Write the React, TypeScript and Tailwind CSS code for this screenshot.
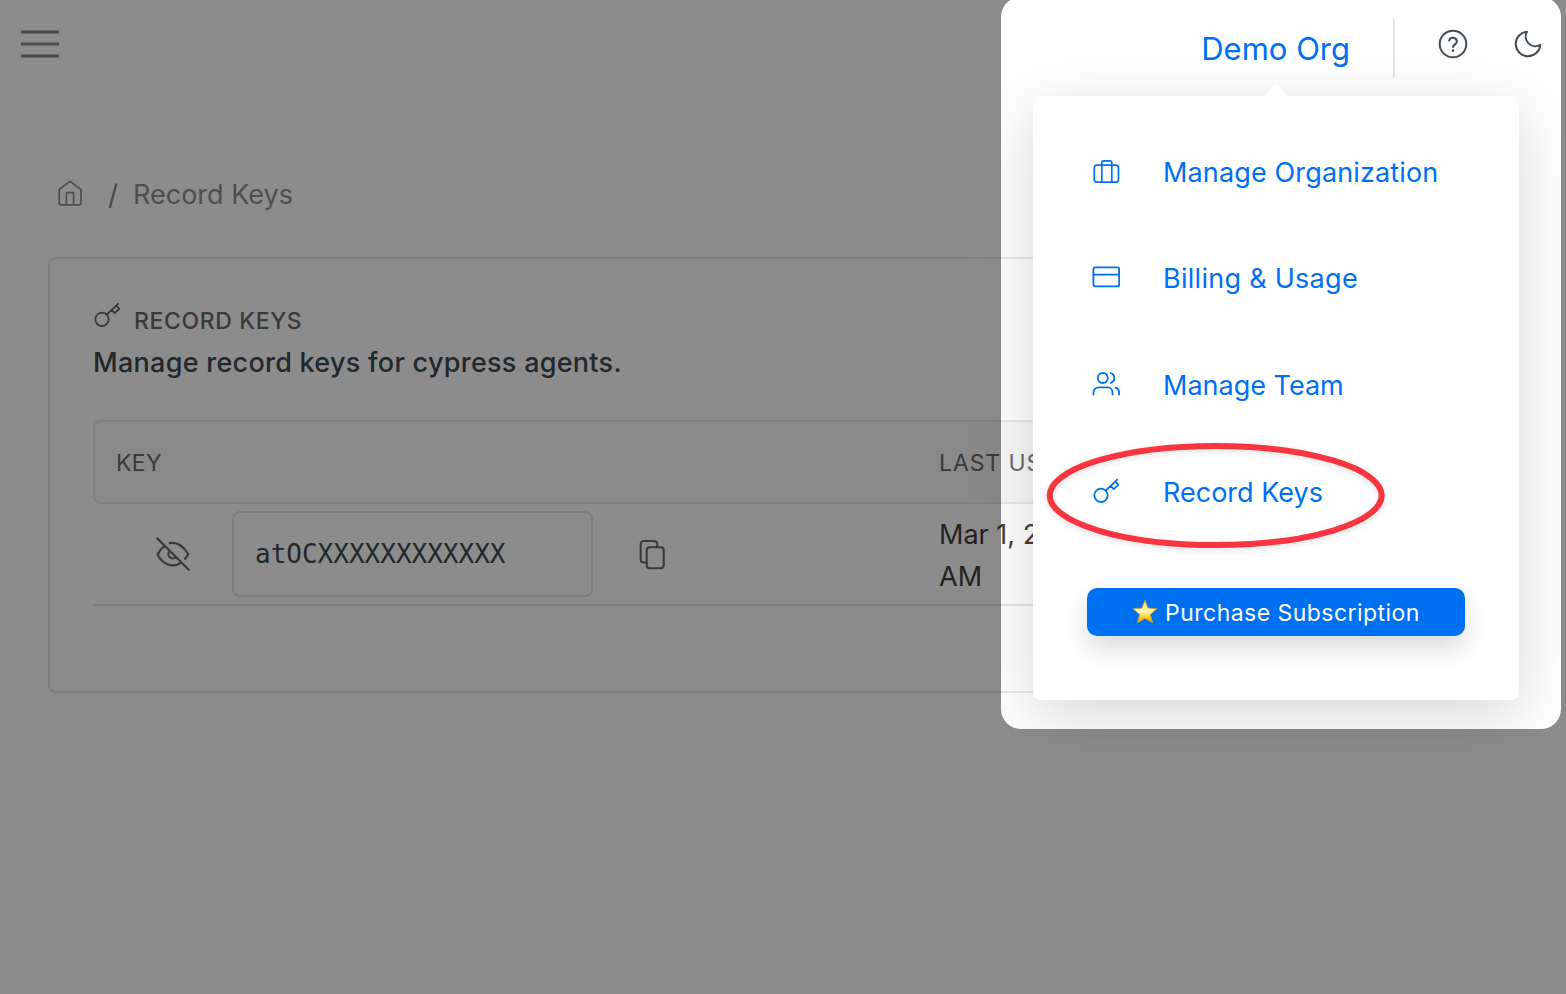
import type { ReactNode } from "react";

type IconProps = { className?: string };

function Stroke({ className, width = 1.5, children }: IconProps & { width?: number; children: ReactNode }) {
  return (
    <svg
      viewBox="0 0 28 28"
      className={"block h-7 w-7 shrink-0 " + (className ?? "")}
      fill="none"
      stroke="currentColor"
      strokeWidth={width}
      strokeLinecap="round"
      strokeLinejoin="round"
    >
      {children}
    </svg>
  );
}

const KeyIcon = ({ className }: IconProps) => (
  <Stroke className={className} width={1.8}>
    <circle cx="9" cy="18.3" r="6.7" />
    <path d="M13.8 13.5 25.3 2.600M18.700 9l3 3.100 4.600-4.300-3-3.100" />
  </Stroke>
);

const BriefcaseIcon = () => (
  <Stroke width={1.7}>
    <rect x="2.300" y="8.200" width="24.200" height="17" rx="2.600" />
    <path d="M9.800 25V5.800a2 2 0 0 1 2-2h6a2 2 0 0 1 2 2V25" />
  </Stroke>
);

const CardIcon = () => (
  <Stroke width={1.8}>
    <rect x="1.400" y="4.400" width="25.800" height="19" rx="2" />
    <path d="M1.400 11.600h25.800" />
  </Stroke>
);

const UsersIcon = () => (
  <Stroke width={1.8}>
    <circle cx="10.800" cy="8" r="5" />
    <path d="M1.500 24.600v-2.200a5 5 0 0 1 5-5h9a5 5 0 0 1 5 5v2.200M27.100 24.600v-2.200a5 5 0 0 0-3.600-4.700M18.700 3.200a5 5 0 0 1 0 9.600" />
  </Stroke>
);

const HomeIcon = () => (
  <Stroke width={1.7} className="-mt-0.5">
    <path d="M3.200 10.600 14 2.100l11 8.500v13.200a2 2 0 0 1-2 2H5.200a2 2 0 0 1-2-2zM10.400 25.800V13.700h7.200v12.100" />
  </Stroke>
);

const HelpIcon = () => (
  <Stroke width={2} className="overflow-visible">
    <circle cx="14" cy="14" r="13.3" />
    <path d="M10.1 10.5a4 4 0 0 1 7.8 1.1c0 2.8-3.9 3.2-3.9 5.4" />
    <circle cx="14" cy="20.6" r="0.8" fill="currentColor" strokeWidth="1.2" />
  </Stroke>
);

const MoonIcon = () => (
  <Stroke width={2}>
    <path d="M26.3 14.9A12.3 12.3 0 1 1 13 1.700a9.700 9.700 0 0 0 13.300 13.200z" />
  </Stroke>
);

const MenuIcon = () => (
  <svg viewBox="0 0 40 28" className="block h-7 w-10" stroke="currentColor" strokeWidth="3" strokeLinecap="round">
    <path d="M2.200 2h35.600M2.200 14h35.600M2.200 26h35.600" />
  </svg>
);

const EyeOffIcon = () => (
  <svg viewBox="0 0 36 36" className="block h-9 w-9 shrink-0" fill="none" stroke="currentColor" strokeWidth="2.200" strokeLinecap="round" strokeLinejoin="round">
    <path d="M2.2 2.4 33.8 33.8M14.8 7.2c8-1.400 14.700 4 18.300 10.900-.7 1.700-1.700 3.300-3 4.700M25.600 27c-8.600 5.400-18.300.8-23.100-8.600 1.900-3.700 4.300-6.500 7.200-8.500M20.800 20.900a4.200 4.200 0 0 1-6.300-5.700" />
  </svg>
);

const CopyIcon = () => (
  <svg viewBox="0 0 26 30" className="block h-[30px] w-[26px] overflow-visible" fill="none" stroke="currentColor" strokeWidth="2.100" strokeLinecap="round" strokeLinejoin="round">
    <rect x="7.700" y="7.200" width="17" height="21" rx="3" />
    <path d="M7.500 22.500H4.700a3 3 0 0 1-3-3V4a3 3 0 0 1 3-3h10.600a3 3 0 0 1 3 3v3" />
  </svg>
);

const StarIcon = () => (
  <svg viewBox="0 0 24 24" className="block h-[26px] w-[26px] shrink-0">
    <defs>
      <linearGradient id="gold" x1="0" y1="0" x2="0" y2="1">
        <stop offset="0" stopColor="#f8d869" />
        <stop offset="0.5" stopColor="#fffab8" />
        <stop offset="0.72" stopColor="#fbd233" />
        <stop offset="1" stopColor="#e59a12" />
      </linearGradient>
    </defs>
    <path
      d="M12 1.200 14.900 8.400 23 9 16.900 14.200 19 22 12 17.900 5 22 7.100 14.200 1 9 9.100 8.400z"
      fill="url(#gold)"
      stroke="#c99a35"
      strokeWidth="0.9"
      strokeLinejoin="round"
    />
  </svg>
);

function MenuItem({ icon, label, spacing }: { icon: ReactNode; label: string; spacing: string }) {
  return (
    <a className="flex h-[106.7px] items-center gap-[43px] pl-[59px]">
      <span className="-mt-0.5">{icon}</span>
      <span className={"pt-0.5 text-[27px] leading-7 whitespace-nowrap " + spacing}>{label}</span>
    </a>
  );
}

export default function App() {
  return (
    <div className="relative h-[994px] w-[1566px] overflow-hidden bg-white font-['Inter',sans-serif] text-[#6b6b6b]">
      <header className="flex h-24 items-start justify-between pr-6 pl-5">
        <button className="mt-[30px] text-[#8b8b8b]">
          <MenuIcon />
        </button>
        <div className="flex items-start">
          <span className="mt-[29px] text-[31px] leading-10 text-[#0070f3]">Demo Org</span>
          <span className="mt-[18px] ml-[43px] h-[60px] w-0.5 bg-[#e6e6e6]" />
          <span className="mt-[30px] ml-11 text-[#454d54]"><HelpIcon /></span>
          <span className="mt-[30px] ml-[47px] text-[#454d54]"><MoonIcon /></span>
        </div>
      </header>

      <main className="pl-12">
        <nav className="mt-[78px] flex h-10 items-center pl-2 text-[27px] leading-7 text-[#909090]">
          <HomeIcon />
          <span className="ml-6 w-[10px] pt-0.5 text-[28px] text-[#858585]">/</span>
          <span className="ml-[15px] pt-0.5">Record Keys</span>
        </nav>

        <section className="mt-[43px] h-[436px] w-[1470px] rounded-lg border-2 border-[#e8e8e8] px-[43px] pt-[43px]">
          <div className="flex h-9 items-center">
            <KeyIcon className="-mt-2.5" />
            <h2 className="ml-[13px] pt-0.5 text-[23px] leading-6 font-medium tracking-[0.62px] text-[#6b6b6b]">RECORD KEYS</h2>
          </div>
          <p className="mt-1 h-10 pt-px text-[27px] leading-10 font-medium tracking-[0.27px] text-[#3e4950]">Manage record keys for cypress agents.</p>

          <div className="mt-[38px]">
            <div className="flex h-[84px] items-center rounded-lg border-2 border-[#e8e8e8] bg-[#f9f9f9] pt-0.5 pl-[21px] text-[23px] leading-9">
              <span className="w-[823px] tracking-[0.4px]">KEY</span>
              <span className="tracking-[0.9px] whitespace-nowrap">LAST USED</span>
            </div>
            <div className="flex h-[102px] items-center border-b-2 border-[#e5e5e5] pl-[62px]">
              <EyeOffIcon />
              <div className="ml-[41px] flex h-[86px] w-[361px] items-center rounded-lg border-2 border-[#e8e8e8] pl-[21px] font-['DejaVu_Sans_Mono',monospace] text-[26px] text-[#3e4950]">
                atOCXXXXXXXXXXXX
              </div>
              <span className="mt-0.5 ml-[46px]"><CopyIcon /></span>
              <div className="mt-[3px] ml-[274px] w-[180px] text-[27px] leading-[42px] text-[#404040]">Mar 1, 2023 AM</div>
            </div>
          </div>
        </section>
      </main>

      <div className="absolute top-24 left-[1033px] h-[604px] w-[486px] rounded-lg bg-white pt-[22.3px] text-[#0070f3] shadow-[0_16px_64px_rgba(0,0,0,0.16)]">
        <svg viewBox="0 0 24 14" className="absolute -top-[13px] left-[231px] h-3.5 w-6" fill="white">
          <path d="M0 14 10.600 1.200Q12-.2 13.400 1.200L24 14z" />
        </svg>
        <MenuItem icon={<BriefcaseIcon />} label="Manage Organization" spacing="tracking-[0.14px]" />
        <MenuItem icon={<CardIcon />} label="Billing & Usage" spacing="tracking-[0.28px]" />
        <MenuItem icon={<UsersIcon />} label="Manage Team" spacing="tracking-normal" />
        <MenuItem icon={<KeyIcon />} label="Record Keys" spacing="tracking-normal" />
        <button className="mt-[42.9px] ml-[54px] flex h-12 w-[378px] items-center justify-center gap-[7px] rounded-[10px] bg-[#0070f3] text-[23px] leading-9 tracking-[0.46px] text-white shadow-[0_12px_26px_rgba(0,0,0,0.15)]">
          <StarIcon />
          <span className="pt-0.5">Purchase Subscription</span>
        </button>
      </div>

      <div className="absolute -top-[3px] left-[1001px] h-[732px] w-[560px] rounded-[20px] shadow-[0_0_0_2000px_rgba(0,0,0,0.45)]" />

      <svg viewBox="0 0 350 120" className="absolute top-[436px] left-[1041px] h-[120px] w-[350px] overflow-visible drop-shadow-[0_2px_3px_rgba(0,0,0,0.12)]" fill="none">
        <ellipse cx="174.700" cy="59.500" rx="166" ry="49.500" stroke="#fa3440" strokeWidth="6" />
      </svg>
    </div>
  );
}
